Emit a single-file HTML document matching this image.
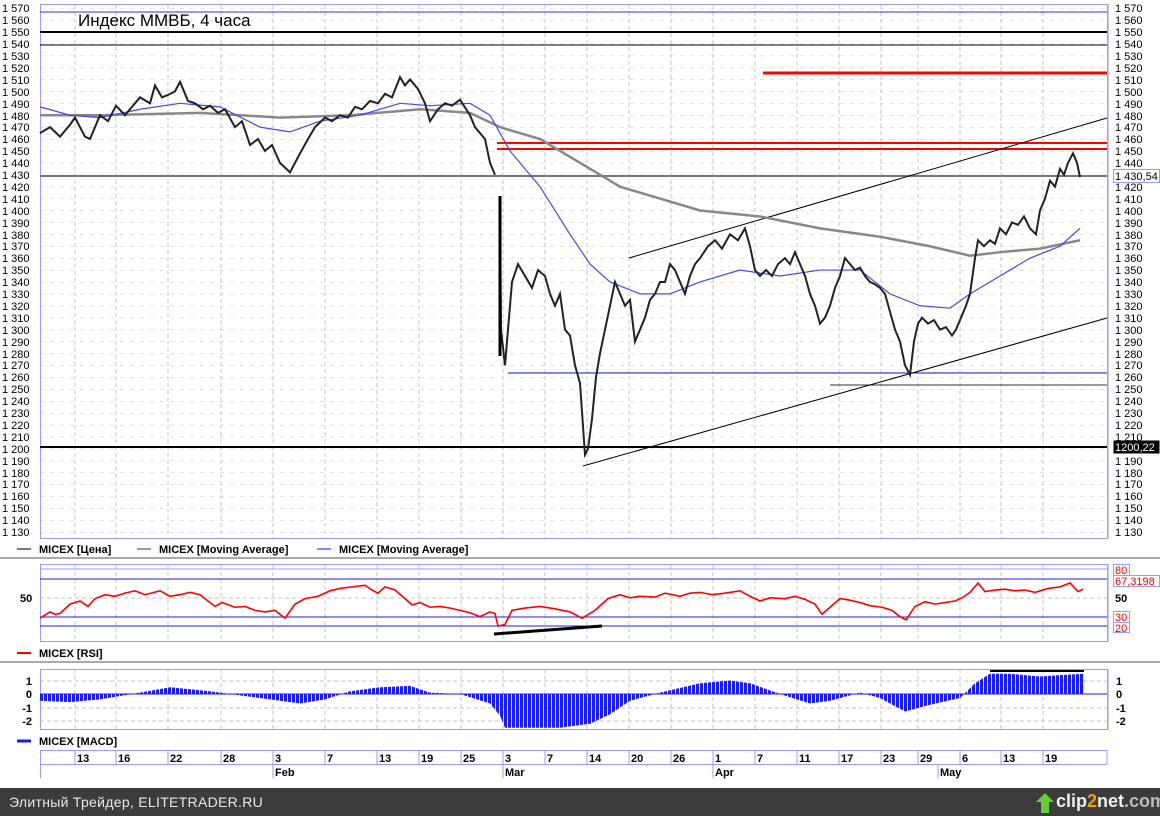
<!DOCTYPE html>
<html><head><meta charset="utf-8"><style>
html,body{margin:0;padding:0;background:#fff;width:1160px;height:816px;overflow:hidden}
svg text{font-family:"Liberation Sans","DejaVu Sans",sans-serif}
.ft{position:absolute;left:0;top:788px;width:1160px;height:28px;background:#3c3c3c;color:#e8e8e8;font:14px "Liberation Sans","DejaVu Sans",sans-serif}
</style></head><body>
<svg width="1160" height="788" viewBox="0 0 1160 788" style="position:absolute;left:0;top:0">
<defs>
<pattern id="hg" width="10" height="11.91" patternUnits="userSpaceOnUse" y="8">
<line x1="0" y1="0" x2="4" y2="0" stroke="#c4c4c4" stroke-width="1"/></pattern>
<pattern id="st" width="4" height="10" patternUnits="userSpaceOnUse"><rect x="0" y="0" width="3" height="10" fill="#1a1aff"/></pattern>
</defs>
<rect x="0" y="0" width="1160" height="788" fill="#fff"/>
<rect x="40" y="8" width="1067" height="526" fill="url(#hg)"/>
<g stroke="#c4c4c4" stroke-dasharray="4,3">
<line x1="75" y1="5" x2="75" y2="538"/><line x1="116" y1="5" x2="116" y2="538"/><line x1="168" y1="5" x2="168" y2="538"/><line x1="221" y1="5" x2="221" y2="538"/><line x1="273" y1="5" x2="273" y2="538"/><line x1="325" y1="5" x2="325" y2="538"/><line x1="377" y1="5" x2="377" y2="538"/><line x1="419" y1="5" x2="419" y2="538"/><line x1="461" y1="5" x2="461" y2="538"/><line x1="503" y1="5" x2="503" y2="538"/><line x1="545" y1="5" x2="545" y2="538"/><line x1="587" y1="5" x2="587" y2="538"/><line x1="629" y1="5" x2="629" y2="538"/><line x1="671" y1="5" x2="671" y2="538"/><line x1="713" y1="5" x2="713" y2="538"/><line x1="755" y1="5" x2="755" y2="538"/><line x1="797" y1="5" x2="797" y2="538"/><line x1="839" y1="5" x2="839" y2="538"/><line x1="881" y1="5" x2="881" y2="538"/><line x1="918" y1="5" x2="918" y2="538"/><line x1="960" y1="5" x2="960" y2="538"/><line x1="1001" y1="5" x2="1001" y2="538"/><line x1="1043" y1="5" x2="1043" y2="538"/>
</g>
<rect x="40.5" y="4.5" width="1067" height="534" fill="none" stroke="#9a9aff"/>
<line x1="40" y1="12" x2="1107" y2="12" stroke="#3030e0"/>
<line x1="40" y1="32" x2="1107" y2="32" stroke="#000" stroke-width="2"/>
<line x1="40" y1="45" x2="1107" y2="45" stroke="#000"/>
<line x1="763" y1="73" x2="1107" y2="73" stroke="#f00" stroke-width="3"/>
<line x1="497" y1="143" x2="1107" y2="143" stroke="#f00" stroke-width="2"/>
<line x1="497" y1="149" x2="1107" y2="149" stroke="#f00" stroke-width="2"/>
<line x1="40" y1="176" x2="1107" y2="176" stroke="#777" stroke-width="2"/>
<line x1="40" y1="447" x2="1107" y2="447" stroke="#000" stroke-width="2"/>
<line x1="508" y1="373" x2="1107" y2="373" stroke="#1010c0"/>
<line x1="830" y1="385" x2="1107" y2="385" stroke="#333"/>
<line x1="629" y1="258" x2="1107" y2="118" stroke="#000"/>
<line x1="583" y1="466" x2="1107" y2="318" stroke="#000"/>
<text x="78" y="26" font-size="17">Индекс ММВБ, 4 часа</text>
<g transform="matrix(1 0 0 -1.191 0 1877.9)" fill="none">
<polyline vector-effect="non-scaling-stroke" stroke="#888" stroke-width="2.5" points="40,1480 100,1480 200,1482 280,1478 350,1480 420,1485 470,1482 500,1470 540,1460 580,1440 620,1420 660,1410 700,1400 760,1395 820,1385 880,1378 930,1370 970,1362 1000,1365 1040,1368 1080,1375"/>
<polyline vector-effect="non-scaling-stroke" stroke="#4848f0" stroke-width="1.2" points="40,1487 70,1480 100,1478 140,1485 180,1490 220,1487 260,1470 290,1466 320,1475 360,1480 400,1490 430,1488 470,1490 490,1480 510,1450 540,1420 570,1380 590,1355 610,1340 640,1330 670,1330 700,1340 740,1350 780,1345 820,1350 860,1350 890,1330 920,1320 950,1318 970,1330 1000,1345 1030,1360 1060,1370 1080,1385"/>
<polyline vector-effect="non-scaling-stroke" stroke="#222" stroke-width="2" points="40,1465 50,1470 60,1462 70,1472 75,1478 85,1462 90,1460 100,1480 108,1475 116,1488 125,1480 130,1485 140,1495 150,1490 155,1505 162,1495 168,1497 175,1500 180,1508 188,1492 195,1490 203,1485 210,1488 218,1482 225,1485 235,1470 242,1475 250,1455 258,1460 265,1450 272,1455 280,1440 290,1432 295,1440 300,1448 308,1460 315,1470 325,1478 332,1475 340,1480 348,1478 355,1487 362,1485 370,1492 378,1490 385,1498 392,1495 400,1512 405,1505 410,1510 418,1502 425,1490 430,1475 438,1485 445,1490 452,1488 460,1493 470,1480 475,1470 480,1465 485,1460 490,1440 495,1430"/>
<polyline vector-effect="non-scaling-stroke" stroke="#222" stroke-width="2" points="500,1410 501,1300 505,1270 508,1300 512,1340 518,1355 525,1345 532,1335 538,1350 545,1345 550,1330 555,1320 560,1330 565,1300 570,1295 575,1270 580,1255 585,1195 588,1200 592,1225 596,1260 600,1280 605,1300 610,1320 615,1340 620,1330 625,1320 630,1325 635,1290 640,1300 645,1310 650,1325 655,1330 660,1340 665,1340 670,1355 675,1350 680,1340 685,1330 690,1345 695,1355 700,1360 708,1370 715,1375 722,1368 730,1380 738,1375 745,1385 750,1370 755,1350 760,1345 766,1350 772,1345 778,1355 785,1360 790,1355 795,1365 800,1355 805,1345 810,1330 815,1320 820,1305 825,1310 830,1320 835,1335 840,1345 845,1360 850,1355 855,1350 860,1352 865,1345 870,1340 875,1338 880,1335 885,1330 890,1315 895,1300 900,1290 905,1270 910,1262 914,1290 918,1305 922,1310 928,1305 934,1308 940,1300 946,1302 952,1295 956,1300 962,1312 966,1320 970,1330 975,1360 978,1375 984,1370 990,1375 995,1372 1000,1385 1006,1380 1012,1390 1018,1388 1024,1395 1030,1385 1036,1380 1040,1400 1045,1410 1050,1425 1055,1420 1060,1435 1064,1430 1068,1440 1073,1448 1077,1440 1080,1428"/>
</g>
<line x1="500" y1="196" x2="500" y2="356" stroke="#000" stroke-width="3"/>
<line x1="1108" y1="4" x2="1108" y2="538" stroke="#9a9aff"/>
<g font-size="11" fill="#000">
<g text-anchor="start">
<text x="2" y="12">1 570</text><text x="2" y="24">1 560</text><text x="2" y="36">1 550</text><text x="2" y="48">1 540</text><text x="2" y="60">1 530</text><text x="2" y="72">1 520</text><text x="2" y="84">1 510</text><text x="2" y="96">1 500</text><text x="2" y="108">1 490</text><text x="2" y="120">1 480</text><text x="2" y="131">1 470</text><text x="2" y="143">1 460</text><text x="2" y="155">1 450</text><text x="2" y="167">1 440</text><text x="2" y="179">1 430</text><text x="2" y="191">1 420</text><text x="2" y="203">1 410</text><text x="2" y="215">1 400</text><text x="2" y="227">1 390</text><text x="2" y="239">1 380</text><text x="2" y="250">1 370</text><text x="2" y="262">1 360</text><text x="2" y="274">1 350</text><text x="2" y="286">1 340</text><text x="2" y="298">1 330</text><text x="2" y="310">1 320</text><text x="2" y="322">1 310</text><text x="2" y="334">1 300</text><text x="2" y="346">1 290</text><text x="2" y="358">1 280</text><text x="2" y="369">1 270</text><text x="2" y="381">1 260</text><text x="2" y="393">1 250</text><text x="2" y="405">1 240</text><text x="2" y="417">1 230</text><text x="2" y="429">1 220</text><text x="2" y="441">1 210</text><text x="2" y="453">1 200</text><text x="2" y="465">1 190</text><text x="2" y="477">1 180</text><text x="2" y="488">1 170</text><text x="2" y="500">1 160</text><text x="2" y="512">1 150</text><text x="2" y="524">1 140</text><text x="2" y="536">1 130</text>
</g>
<g>
<text x="1115" y="12">1 570</text><text x="1115" y="24">1 560</text><text x="1115" y="36">1 550</text><text x="1115" y="48">1 540</text><text x="1115" y="60">1 530</text><text x="1115" y="72">1 520</text><text x="1115" y="84">1 510</text><text x="1115" y="96">1 500</text><text x="1115" y="108">1 490</text><text x="1115" y="120">1 480</text><text x="1115" y="131">1 470</text><text x="1115" y="143">1 460</text><text x="1115" y="155">1 450</text><text x="1115" y="167">1 440</text><text x="1115" y="191">1 420</text><text x="1115" y="203">1 410</text><text x="1115" y="215">1 400</text><text x="1115" y="227">1 390</text><text x="1115" y="239">1 380</text><text x="1115" y="250">1 370</text><text x="1115" y="262">1 360</text><text x="1115" y="274">1 350</text><text x="1115" y="286">1 340</text><text x="1115" y="298">1 330</text><text x="1115" y="310">1 320</text><text x="1115" y="322">1 310</text><text x="1115" y="334">1 300</text><text x="1115" y="346">1 290</text><text x="1115" y="358">1 280</text><text x="1115" y="369">1 270</text><text x="1115" y="381">1 260</text><text x="1115" y="393">1 250</text><text x="1115" y="405">1 240</text><text x="1115" y="417">1 230</text><text x="1115" y="429">1 220</text><text x="1115" y="441">1 210</text><text x="1115" y="465">1 190</text><text x="1115" y="477">1 180</text><text x="1115" y="488">1 170</text><text x="1115" y="500">1 160</text><text x="1115" y="512">1 150</text><text x="1115" y="524">1 140</text><text x="1115" y="536">1 130</text>
</g>
<rect x="1113.5" y="169.5" width="46" height="13" fill="#fff" stroke="#9a9aff"/><text x="1115" y="180">1 430,54</text>
<rect x="1113.5" y="440.5" width="46" height="13" fill="#000"/><text x="1115" y="451" fill="#fff">1200,22</text>
</g>
<g font-size="11" font-weight="bold">
<line x1="17" y1="549" x2="31" y2="549" stroke="#777" stroke-width="2"/><text x="39" y="553">MICEX [Цена]</text>
<line x1="137" y1="549" x2="151" y2="549" stroke="#999" stroke-width="2"/><text x="159" y="553">MICEX [Moving Average]</text>
<line x1="317" y1="549" x2="331" y2="549" stroke="#8888ff" stroke-width="2"/><text x="339" y="553">MICEX [Moving Average]</text>
</g>
<line x1="0" y1="558" x2="1160" y2="558" stroke="#aaa" stroke-width="2"/>
<g stroke="#c4c4c4" stroke-dasharray="4,3">
<line x1="40" y1="598" x2="1107" y2="598"/>
<line x1="75" y1="565" x2="75" y2="642"/><line x1="116" y1="565" x2="116" y2="642"/><line x1="168" y1="565" x2="168" y2="642"/><line x1="221" y1="565" x2="221" y2="642"/><line x1="273" y1="565" x2="273" y2="642"/><line x1="325" y1="565" x2="325" y2="642"/><line x1="377" y1="565" x2="377" y2="642"/><line x1="419" y1="565" x2="419" y2="642"/><line x1="461" y1="565" x2="461" y2="642"/><line x1="503" y1="565" x2="503" y2="642"/><line x1="545" y1="565" x2="545" y2="642"/><line x1="587" y1="565" x2="587" y2="642"/><line x1="629" y1="565" x2="629" y2="642"/><line x1="671" y1="565" x2="671" y2="642"/><line x1="713" y1="565" x2="713" y2="642"/><line x1="755" y1="565" x2="755" y2="642"/><line x1="797" y1="565" x2="797" y2="642"/><line x1="839" y1="565" x2="839" y2="642"/><line x1="881" y1="565" x2="881" y2="642"/><line x1="918" y1="565" x2="918" y2="642"/><line x1="960" y1="565" x2="960" y2="642"/><line x1="1001" y1="565" x2="1001" y2="642"/><line x1="1043" y1="565" x2="1043" y2="642"/>
</g>
<rect x="40.5" y="564.5" width="1067" height="77" fill="none" stroke="#9a9aff"/>
<line x1="40" y1="569" x2="1107" y2="569" stroke="#9a9aff"/>
<line x1="40" y1="579" x2="1107" y2="579" stroke="#2020d0"/>
<line x1="40" y1="617" x2="1107" y2="617" stroke="#2020d0"/>
<line x1="40" y1="626" x2="1107" y2="626" stroke="#2020d0"/>
<g transform="matrix(1 0 0 -0.783 0 641.7)">
<polyline vector-effect="non-scaling-stroke" fill="none" stroke="#f00" stroke-width="1.6" points="40,30 50,38 55,35 60,36 70,48 80,52 88,45 95,55 105,60 115,58 125,62 135,65 145,60 160,65 170,58 180,60 190,63 200,60 215,45 222,50 235,44 245,45 255,40 265,38 275,40 285,30 295,48 305,55 318,58 330,65 340,68 352,70 365,72 372,66 378,62 385,70 395,66 405,55 412,47 420,50 430,44 440,45 450,43 460,40 470,37 480,32 490,38 495,36 498,20 505,22 512,40 525,43 540,45 555,42 570,38 582,30 595,40 608,55 620,60 630,56 640,58 655,57 665,62 680,58 690,62 700,63 712,60 725,62 740,65 750,58 760,52 770,56 785,55 795,58 805,54 815,48 822,35 830,44 840,55 850,53 860,50 870,46 882,44 892,40 900,32 906,28 915,45 925,51 935,48 945,50 955,52 962,56 970,63 978,75 985,64 995,66 1005,67 1015,65 1025,66 1035,63 1048,68 1060,70 1070,75 1078,64 1083,67"/>
</g>
<line x1="494" y1="634" x2="602" y2="626" stroke="#000" stroke-width="3"/>
<line x1="1108" y1="564" x2="1108" y2="642" stroke="#9a9aff"/>
<text x="20" y="602" font-size="11" font-weight="bold">50</text>
<g font-size="11" fill="#f00">
<rect x="1113.5" y="564.5" width="16" height="11" fill="#fff" stroke="#9a9aff"/><text x="1115" y="574">80</text>
<rect x="1113.5" y="575.5" width="46" height="11" fill="#fff" stroke="#9a9aff"/><text x="1115" y="585">67,3198</text>
<text x="1115" y="602" fill="#000" font-weight="bold">50</text>
<rect x="1113.5" y="611.5" width="16" height="11" fill="#fff" stroke="#9a9aff"/><text x="1115" y="621">30</text>
<rect x="1113.5" y="622.5" width="16" height="10" fill="#fff" stroke="#9a9aff"/><text x="1115" y="632">20</text>
</g>
<line x1="17" y1="653" x2="31" y2="653" stroke="#f00" stroke-width="2"/>
<text x="39" y="657" font-size="11" font-weight="bold">MICEX [RSI]</text>
<line x1="0" y1="662" x2="1160" y2="662" stroke="#aaa" stroke-width="2"/>
<g stroke="#c4c4c4" stroke-dasharray="4,3">
<line x1="40" y1="681" x2="1107" y2="681"/><line x1="40" y1="708" x2="1107" y2="708"/><line x1="40" y1="721" x2="1107" y2="721"/>
<line x1="75" y1="669" x2="75" y2="730"/><line x1="116" y1="669" x2="116" y2="730"/><line x1="168" y1="669" x2="168" y2="730"/><line x1="221" y1="669" x2="221" y2="730"/><line x1="273" y1="669" x2="273" y2="730"/><line x1="325" y1="669" x2="325" y2="730"/><line x1="377" y1="669" x2="377" y2="730"/><line x1="419" y1="669" x2="419" y2="730"/><line x1="461" y1="669" x2="461" y2="730"/><line x1="503" y1="669" x2="503" y2="730"/><line x1="545" y1="669" x2="545" y2="730"/><line x1="587" y1="669" x2="587" y2="730"/><line x1="629" y1="669" x2="629" y2="730"/><line x1="671" y1="669" x2="671" y2="730"/><line x1="713" y1="669" x2="713" y2="730"/><line x1="755" y1="669" x2="755" y2="730"/><line x1="797" y1="669" x2="797" y2="730"/><line x1="839" y1="669" x2="839" y2="730"/><line x1="881" y1="669" x2="881" y2="730"/><line x1="918" y1="669" x2="918" y2="730"/><line x1="960" y1="669" x2="960" y2="730"/><line x1="1001" y1="669" x2="1001" y2="730"/><line x1="1043" y1="669" x2="1043" y2="730"/>
</g>
<rect x="40.5" y="669.5" width="1067" height="60" fill="none" stroke="#9a9aff"/>
<clipPath id="mc"><polygon transform="matrix(1 0 0 -13.5 0 694)" points="40,0 40,-0.5 70,-0.6 100,-0.4 140,0.1 170,0.5 210,0.2 240,-0.1 270,-0.4 300,-0.7 325,-0.4 350,0.2 380,0.5 410,0.6 430,0.1 460,0 490,-0.7 500,-1.6 505,-2.5 560,-2.5 590,-2.2 610,-1.5 630,-0.5 660,0.1 700,0.8 730,1.0 750,0.8 780,0 810,-0.7 830,-0.5 860,0.1 880,-0.3 905,-1.3 930,-0.8 960,-0.3 975,0.8 990,1.5 1010,1.5 1040,1.3 1060,1.4 1083,1.5 1083,0"/></clipPath>
<rect x="40" y="670" width="1045" height="60" fill="url(#st)" clip-path="url(#mc)"/>
<line x1="40" y1="694" x2="1107" y2="694" stroke="#1a1aff"/>
<line x1="990" y1="671" x2="1084" y2="671" stroke="#000" stroke-width="2"/>
<line x1="1108" y1="669" x2="1108" y2="730" stroke="#9a9aff"/>
<g font-size="11" font-weight="bold" text-anchor="end">
<text x="32" y="685">1</text><text x="32" y="698">0</text><text x="32" y="712">-1</text><text x="32" y="725">-2</text>
</g>
<g font-size="11" font-weight="bold">
<text x="1116" y="685">1</text><text x="1116" y="698">0</text><text x="1116" y="712">-1</text><text x="1116" y="725">-2</text>
</g>
<line x1="17" y1="741" x2="31" y2="741" stroke="#1a1aff" stroke-width="3"/>
<text x="39" y="745" font-size="11" font-weight="bold">MICEX [MACD]</text>
<g stroke="#9a9aff" fill="none">
<line x1="40" y1="750.5" x2="1107" y2="750.5"/><line x1="40" y1="764.5" x2="1107" y2="764.5"/>
<line x1="40.5" y1="750" x2="40.5" y2="778"/>
<line x1="75" y1="750" x2="75" y2="764"/><line x1="116" y1="750" x2="116" y2="764"/><line x1="168" y1="750" x2="168" y2="764"/><line x1="221" y1="750" x2="221" y2="764"/><line x1="273" y1="750" x2="273" y2="778"/><line x1="325" y1="750" x2="325" y2="764"/><line x1="377" y1="750" x2="377" y2="764"/><line x1="419" y1="750" x2="419" y2="764"/><line x1="461" y1="750" x2="461" y2="764"/><line x1="503" y1="750" x2="503" y2="778"/><line x1="545" y1="750" x2="545" y2="764"/><line x1="587" y1="750" x2="587" y2="764"/><line x1="629" y1="750" x2="629" y2="764"/><line x1="671" y1="750" x2="671" y2="764"/><line x1="713" y1="750" x2="713" y2="778"/><line x1="755" y1="750" x2="755" y2="764"/><line x1="797" y1="750" x2="797" y2="764"/><line x1="839" y1="750" x2="839" y2="764"/><line x1="881" y1="750" x2="881" y2="764"/><line x1="918" y1="750" x2="918" y2="764"/><line x1="938" y1="764" x2="938" y2="778"/><line x1="960" y1="750" x2="960" y2="764"/><line x1="1001" y1="750" x2="1001" y2="764"/><line x1="1043" y1="750" x2="1043" y2="764"/><line x1="1107" y1="750" x2="1107" y2="764"/>
</g>
<g font-size="11" font-weight="bold">
<text x="77" y="762">13</text><text x="118" y="762">16</text><text x="170" y="762">22</text><text x="223" y="762">28</text><text x="275" y="762">3</text><text x="327" y="762">7</text><text x="379" y="762">13</text><text x="421" y="762">19</text><text x="463" y="762">25</text><text x="505" y="762">3</text><text x="547" y="762">7</text><text x="589" y="762">14</text><text x="631" y="762">20</text><text x="673" y="762">26</text><text x="715" y="762">1</text><text x="757" y="762">7</text><text x="799" y="762">11</text><text x="841" y="762">17</text><text x="883" y="762">23</text><text x="920" y="762">29</text><text x="962" y="762">6</text><text x="1003" y="762">13</text><text x="1045" y="762">19</text>
<text x="275" y="776">Feb</text><text x="505" y="776">Mar</text><text x="715" y="776">Apr</text><text x="940" y="776">May</text>
</g>
</svg>
<div class="ft"><span style="position:absolute;left:9px;top:6px;letter-spacing:0.3px">Элитный Трейдер, ELITETRADER.RU</span>
<span style="position:absolute;left:1056px;top:3px;font-size:18px;font-weight:bold;color:#eee">clip<span style="color:#f0a000">2</span>net<span style="color:#bbb">.com</span></span>
<svg style="position:absolute;left:1036px;top:5px" width="18" height="20"><polygon points="9,0 18,9 13,9 13,20 5,20 5,9 0,9" fill="#6c3"/></svg></div>
</body></html>
